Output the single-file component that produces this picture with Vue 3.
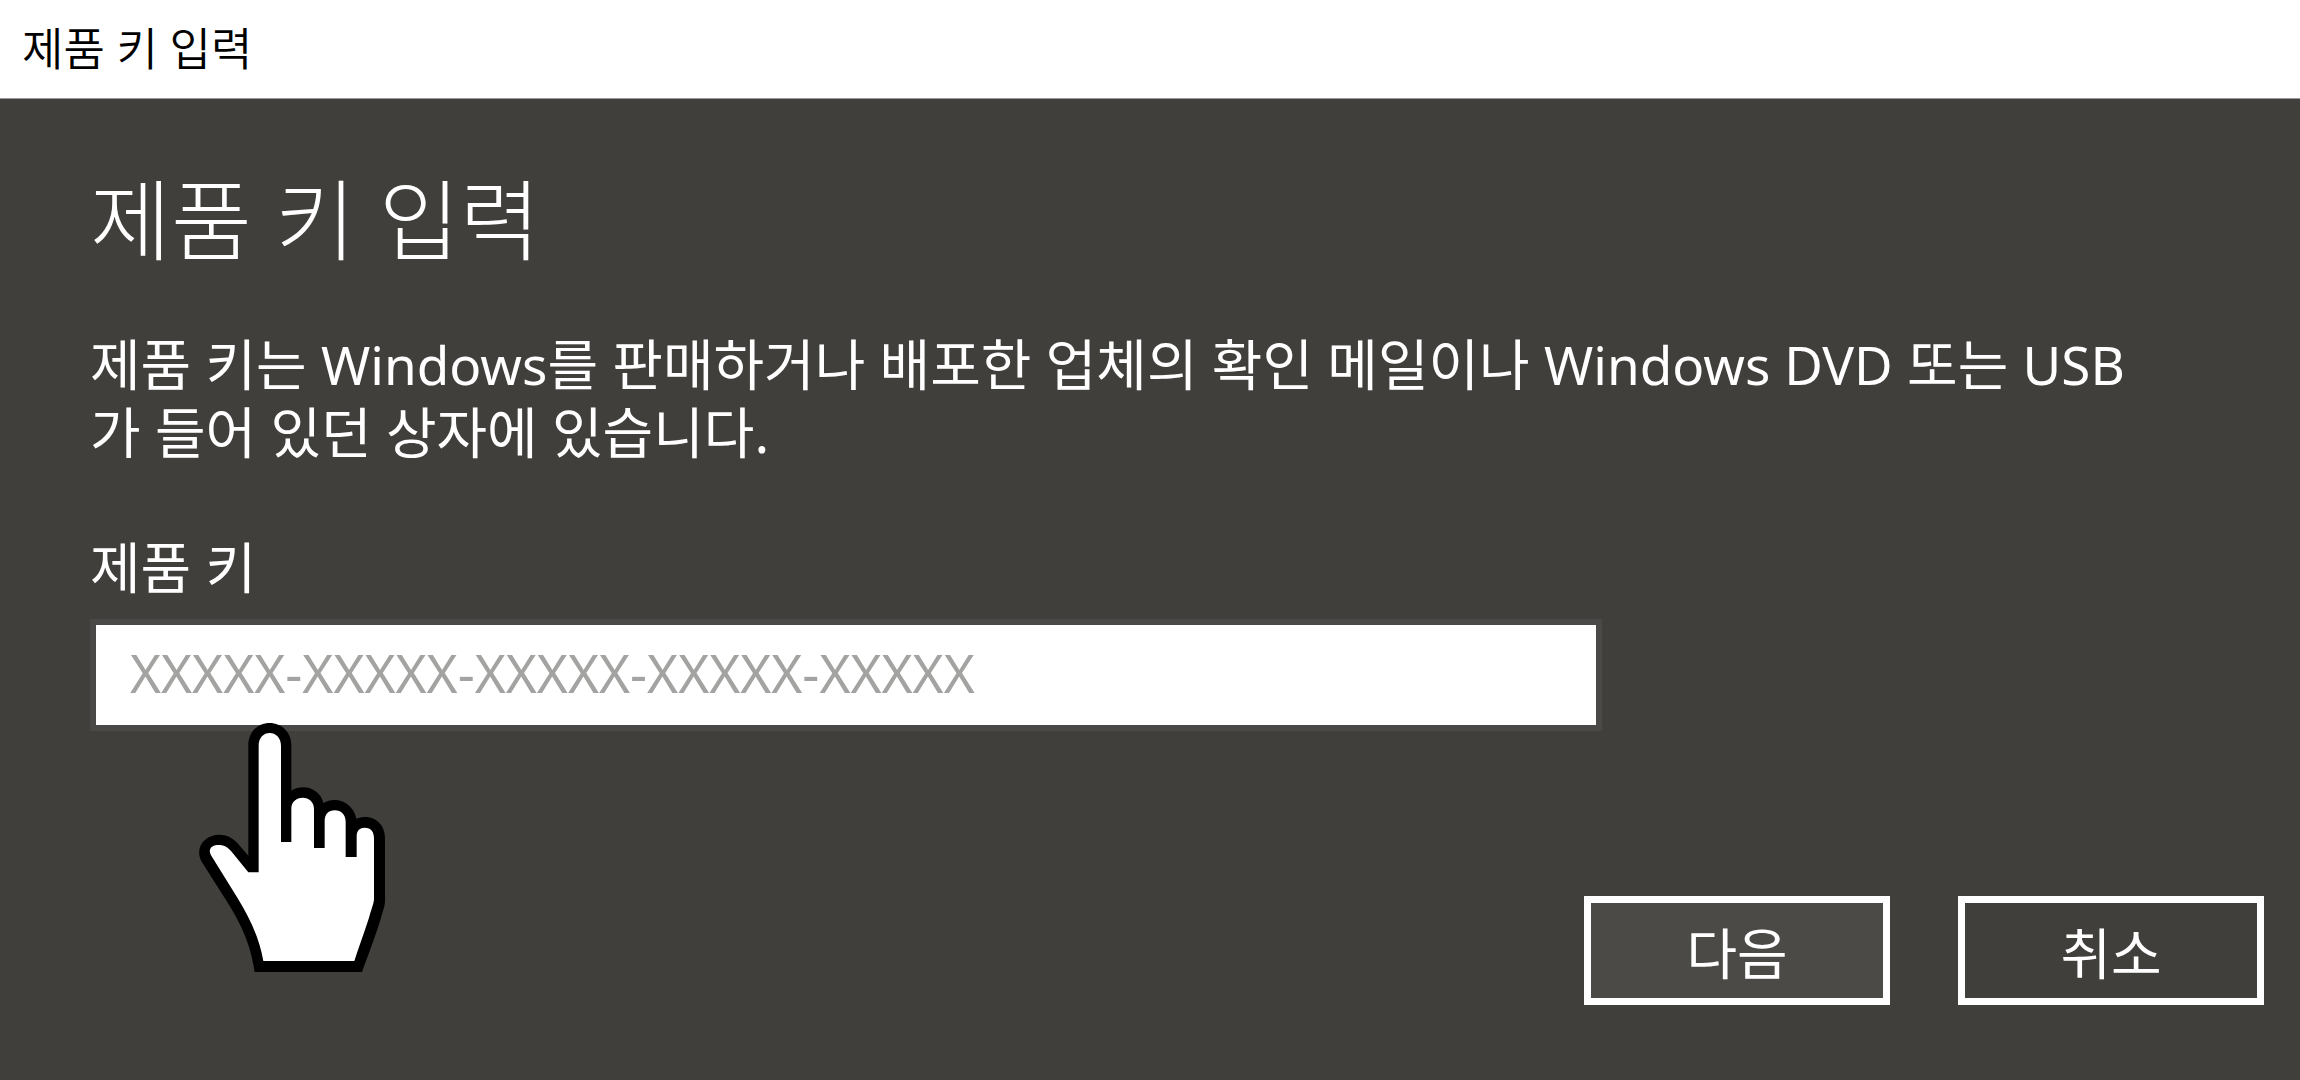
<script setup>
import { ref } from 'vue'

const productKey = ref('')
</script>

<template>
  <div class="dialog">
    <header class="titlebar">제품 키 입력</header>
    <form class="body" @submit.prevent>
      <h1>제품 키 입력</h1>
      <p class="description">
        제품 키는 <span class="latin">Windows</span>를 판매하거나 배포한 업체의 확인 메일이나
        <span class="latin">Windows DVD</span> 또는 <span class="latin">USB</span><br />가 들어 있던 상자에 있습니다.
      </p>
      <label for="product-key">제품 키</label>
      <div class="field">
        <input
          id="product-key"
          v-model="productKey"
          type="text"
          autocomplete="off"
          placeholder="XXXXX-XXXXX-XXXXX-XXXXX-XXXXX"
        />
        <svg class="pointer" viewBox="57 66 558 747" aria-hidden="true">
          <path
            d="M224 813C215 752 196 690 146 610L66 484C42 442 72 401 118 401C140 401 156 410 170 424L205 464V132C205 94 233 66 269 66S334 94 334 132V269C372 246 421 264 430 306C468 283 520 304 529 353C574 337 615 363 615 412V600C615 612 611 624 606 640C591 694 570 747 546 813Z"
            fill="#000"
          />
          <path
            d="M250 780C238 710 209 651 174 593L93 463C82 442 98 432 116 432C134 432 144 440 155 452L205 514H236V134C236 110 251 96 269 96S303 110 303 134V423H334V323C334 302 349 290 368 290S402 303 402 324V441H434V360C434 340 446 328 464 328C484 328 497 342 497 362V468H530V406C530 388 540 380 554 380C574 380 582 392 582 414V594C582 605 575 622 570 640C559 678 541 725 523 780Z"
            fill="#fff"
          />
        </svg>
      </div>
      <div class="actions">
        <button type="submit" class="primary">다음</button>
        <button type="button">취소</button>
      </div>
    </form>
  </div>
</template>

<style>
body {
  margin: 0;
  background: #413f3b;
}
</style>

<style scoped>
.dialog,
.dialog input,
.dialog button {
  font-family: 'Noto Sans', 'Noto Sans CJK KR', sans-serif;
}

.dialog {
  display: flex;
  flex-direction: column;
  min-height: 100vh;
  background: #413f3b;
  color: #fff;
}

.titlebar {
  box-sizing: border-box;
  height: 99px;
  padding: 0 22px;
  border-bottom: 1px solid #9b9a98;
  background: #fff;
  color: #000;
  font-size: 45px;
  font-weight: 350;
  line-height: 98px;
}

.body {
  display: flex;
  flex: 1;
  flex-direction: column;
  padding: 60px 36px 75px 90px;
}

h1 {
  margin: 0;
  font-size: 88px;
  font-weight: 300;
  line-height: 120px;
}

.description {
  margin: 51px 0 0;
  font-size: 55px;
  line-height: 68px;
}

.latin {
  font-size: 53px;
  line-height: 1;
}

label {
  align-self: flex-start;
  margin: 67px 0 18px;
  font-size: 55px;
  line-height: 68px;
}

.field {
  position: relative;
  width: 100%;
  max-width: 1512px;
}

input {
  display: block;
  box-sizing: border-box;
  width: 100%;
  height: 112px;
  padding: 0 34px 6px;
  border: 6px solid #4a4947;
  border-radius: 0;
  outline: none;
  background: #fff;
  color: #000;
  font-size: 53px;
}

input::placeholder {
  color: #a3a3a1;
  opacity: 1;
}

.pointer {
  position: absolute;
  top: 104px;
  left: 109px;
  width: 186px;
  height: 249px;
  pointer-events: none;
}

.actions {
  display: flex;
  justify-content: flex-end;
  gap: 68px;
  margin-top: auto;
}

button {
  box-sizing: border-box;
  width: 306px;
  height: 109px;
  padding: 4px 0 0;
  border: 7px solid #fff;
  border-radius: 0;
  background: transparent;
  color: #fff;
  font-size: 55px;
  line-height: 68px;
}

.primary {
  background: #4b4a47;
}
</style>
